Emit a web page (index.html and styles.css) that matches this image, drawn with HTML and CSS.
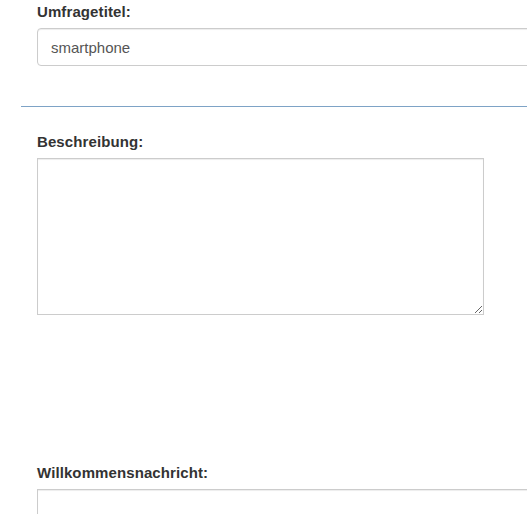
FILE: index.html
```html
<!DOCTYPE html>
<html lang="de">
<head>
  <meta charset="UTF-8">
  <meta name="viewport" content="width=device-width, initial-scale=1.0">
  <title>Umfrage bearbeiten</title>
  <link rel="stylesheet" href="styles.css">
</head>
<body>
  <div class="survey">
    <div class="form-group">
      <label for="title">Umfragetitel:</label>
      <input type="text" id="title" class="input-text rounded" value="smartphone">
    </div>

    <hr class="divider">

    <div class="form-group">
      <label for="description">Beschreibung:</label>
      <textarea id="description" class="input-area"></textarea>
    </div>

    <div class="form-group welcome">
      <label for="welcome">Willkommensnachricht:</label>
      <input type="text" id="welcome" class="input-text">
    </div>
  </div>
</body>
</html>
```

FILE: styles.css
```css
/***----BASIC----***/
body {
  margin: 0;
  font-family: 'Liberation Sans', Arial, sans-serif;
  font-size: 15px;
  color: #333;
  background: #fff;
}
.survey {
  overflow: hidden;
  padding: 2px 0 0 21px;
}

/***----Form Style----***/
.form-group {
  padding-left: 16px;
}
.form-group label {
  display: block;
  font-weight: 700;
  line-height: 20px;
  letter-spacing: 0.1px;
  margin-bottom: 6px;
  color: #333;
}
.input-text {
  display: block;
  box-sizing: border-box;
  width: 560px;
  height: 38px;
  padding: 0 13px;
  border: 1px solid #ccc;
  border-radius: 0;
  box-shadow: inset 0 1px 1px rgba(0, 0, 0, 0.075);
  font-family: inherit;
  font-size: 15px;
  color: #555;
  outline: none;
}
.input-text.rounded {
  border-radius: 4px;
}
.input-area {
  display: block;
  box-sizing: border-box;
  width: 447px;
  height: 157px;
  margin: 0;
  padding: 6px 12px;
  border: 1px solid #ccc;
  border-radius: 0;
  box-shadow: inset 0 1px 1px rgba(0, 0, 0, 0.075);
  font-family: inherit;
  font-size: 15px;
  color: #555;
  outline: none;
}

/* Trennlinie */
.divider {
  margin: 40px 0 25px;
  border: 0;
  border-top: 1px solid #7ea3c6;
}

.welcome {
  margin-top: 148px;
  padding-bottom: 10px;
}
```
